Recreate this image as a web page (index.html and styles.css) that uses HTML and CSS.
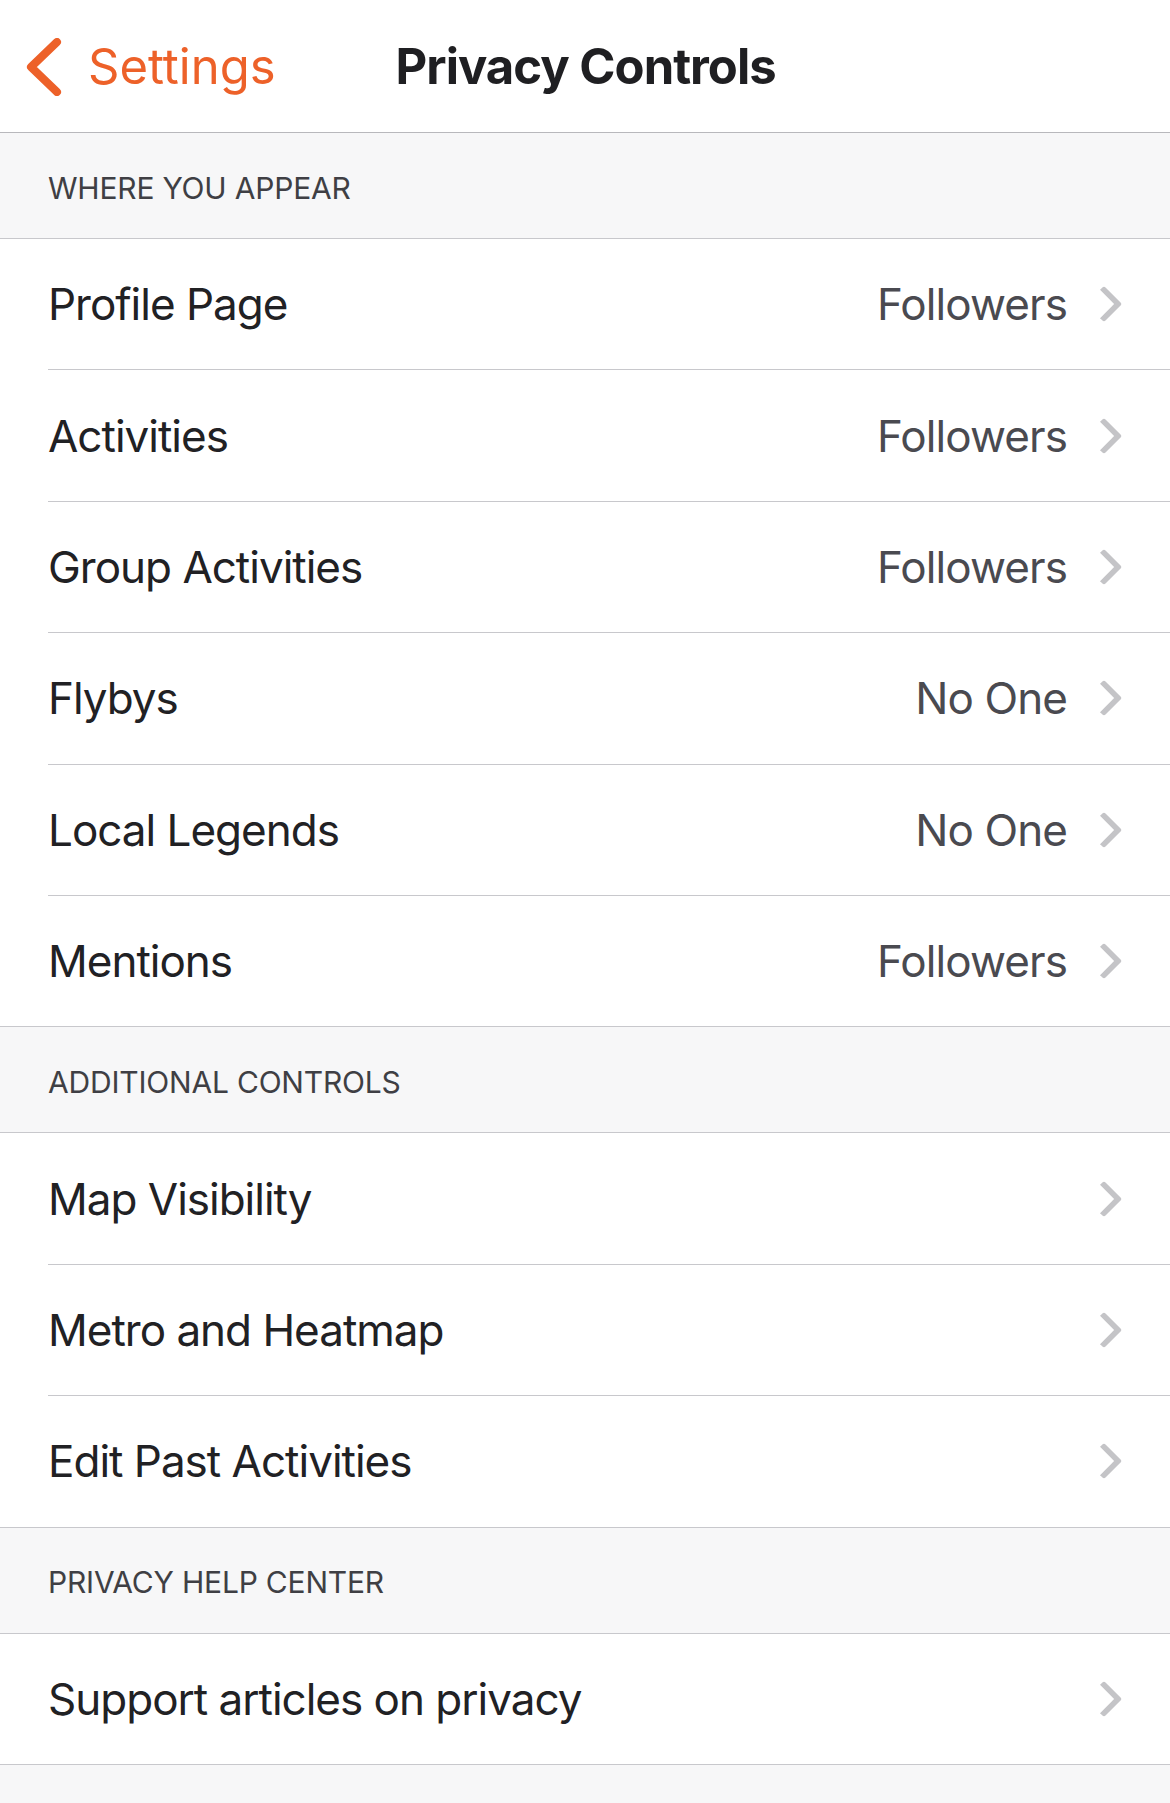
FILE: index.html
```html
<!DOCTYPE html>
<html lang="en">
<head>
<meta charset="utf-8">
<title>Privacy Controls</title>
<link rel="stylesheet" href="styles.css">
</head>
<body>
<div class="screen">
  <header class="nav">
    <a class="back" href="#">
      <svg class="back-icon" viewBox="0 0 36 58" width="36" height="58"><polyline points="31,4 5,29 31,54" fill="none" stroke="#ED6129" stroke-width="8" stroke-linecap="round" stroke-linejoin="round"/></svg>
      <span class="back-label">Settings</span>
    </a>
    <h1 class="title">Privacy Controls</h1>
  </header>

  <div class="section-header">WHERE YOU APPEAR</div>
  <ul class="group">
    <li class="row"><span class="label">Profile Page</span><span class="value">Followers</span><span class="chev"></span></li>
    <li class="row"><span class="label">Activities</span><span class="value">Followers</span><span class="chev"></span></li>
    <li class="row"><span class="label">Group Activities</span><span class="value">Followers</span><span class="chev"></span></li>
    <li class="row"><span class="label">Flybys</span><span class="value">No One</span><span class="chev"></span></li>
    <li class="row"><span class="label">Local Legends</span><span class="value">No One</span><span class="chev"></span></li>
    <li class="row"><span class="label">Mentions</span><span class="value">Followers</span><span class="chev"></span></li>
  </ul>

  <div class="section-header">ADDITIONAL CONTROLS</div>
  <ul class="group">
    <li class="row"><span class="label">Map Visibility</span><span class="chev"></span></li>
    <li class="row"><span class="label">Metro and Heatmap</span><span class="chev"></span></li>
    <li class="row"><span class="label">Edit Past Activities</span><span class="chev"></span></li>
  </ul>

  <div class="section-header">PRIVACY HELP CENTER</div>
  <ul class="group">
    <li class="row"><span class="label">Support articles on privacy</span><span class="chev"></span></li>
  </ul>
  <div class="footer"></div>
</div>
</body>
</html>
```
FILE: styles.css
```css
* { box-sizing: border-box; }
html, body { margin: 0; padding: 0; }
body {
  background: #f7f7f8;
  font-family: Inter, "Noto Sans", sans-serif;
  -webkit-font-smoothing: antialiased;
}
.screen {
  width: 1170px;
  min-height: 1803px;
  background: #f7f7f8;
  display: flex;
  flex-direction: column;
}
.nav {
  height: 133px;
  background: #ffffff;
  border-bottom: 1px solid #b8b8bc;
  display: flex;
  align-items: center;
  position: relative;
}
.back {
  display: flex;
  align-items: center;
  text-decoration: none;
  padding-left: 26px;
  gap: 26px;
}
.back-icon { display: block; margin-top: 2px; }
.back-label {
  color: #ED6129;
  font-size: 49px;
  letter-spacing: 0;
}
.title {
  margin: 0 0 0 120px;
  font-size: 49px;
  font-weight: 700;
  color: #1f1f22;
  letter-spacing: -1px;
}
.section-header {
  height: 106px;
  display: flex;
  align-items: center;
  padding-left: 48px;
  padding-top: 4px;
  font-size: 30px;
  color: #3f3f44;
  letter-spacing: -0.2px;
  background: #f7f7f8;
  border-bottom: 1px solid #c8c8cc;
}
.group {
  list-style: none;
  margin: 0;
  padding: 0 0 0 48px;
  background: #ffffff;
  border-bottom: 1px solid #c8c8cc;
}
.row {
  height: 131.4px;
  display: flex;
  align-items: center;
  padding-right: 48px;
  border-bottom: 1px solid #c8c8cc;
}
.row:last-child { border-bottom: none; height: 130.4px; }
.label {
  flex: 1;
  font-size: 44px;
  color: #212124;
  letter-spacing: -1px;
}
.value {
  font-size: 44px;
  color: #4a4a50;
  letter-spacing: -0.9px;
  margin-right: 33px;
}
.chev {
  width: 22px;
  height: 40px;
  position: relative;
}
.chev::before {
  content: "";
  position: absolute;
  left: -9px;
  top: 7px;
  width: 26px;
  height: 26px;
  border-top: 6px solid #c4c4c7;
  border-right: 6px solid #c4c4c7;
  border-radius: 3px;
  transform: rotate(45deg);
  box-sizing: border-box;
}
.footer { flex: 1; background: #f7f7f8; }
```
